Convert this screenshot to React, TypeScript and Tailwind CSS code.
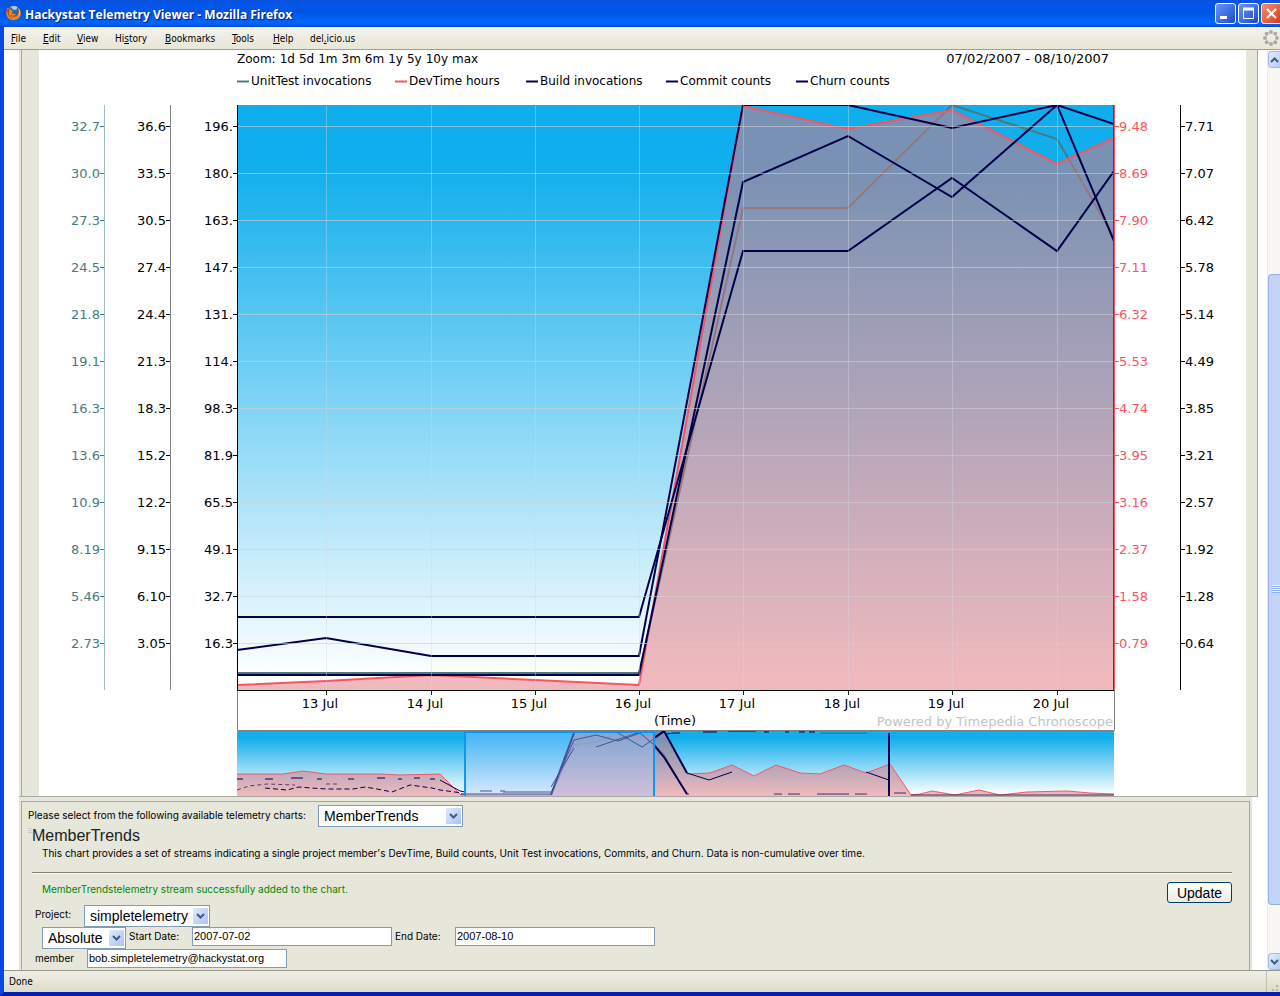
import React from "react";

const menuItems: [string, string, string, string][] = [
  ["", "F", "ile", "w-8"],
  ["", "E", "dit", "w-[34px]"],
  ["", "V", "iew", "w-[38px]"],
  ["Hi", "s", "tory", "w-[50px]"],
  ["", "B", "ookmarks", "w-[67px]"],
  ["", "T", "ools", "w-[41px]"],
  ["", "H", "elp", "w-[37px]"],
  ["del", ".", "icio.us", "w-16"],
];

const legend: [string, string, string][] = [
  ["UnitTest invocations", "bg-[#4a7a80] border-[#a9c0c3]", "w-[158px]"],
  ["DevTime hours", "bg-[#f85464] border-[#fbaab2]", "w-[131px]"],
  ["Build invocations", "bg-[#00004a] border-[#8080a8]", "w-[140px]"],
  ["Commit counts", "bg-[#00004a] border-[#8080a8]", "w-[130px]"],
  ["Churn counts", "bg-[#00004a] border-[#8080a8]", "w-[120px]"],
];

const zooms = ["1d", "5d", "1m", "3m", "6m", "1y", "5y", "10y", "max"];

const tests = ["32.7", "30.0", "27.3", "24.5", "21.8", "19.1", "16.3", "13.6", "10.9", "8.19", "5.46", "2.73"];
const builds = ["36.6", "33.5", "30.5", "27.4", "24.4", "21.3", "18.3", "15.2", "12.2", "9.15", "6.10", "3.05"];
const commits = ["196.", "180.", "163.", "147.", "131.", "114.", "98.3", "81.9", "65.5", "49.1", "32.7", "16.3"];
const hours = ["9.48", "8.69", "7.90", "7.11", "6.32", "5.53", "4.74", "3.95", "3.16", "2.37", "1.58", "0.79"];
const churn = ["7.71", "7.07", "6.42", "5.78", "5.14", "4.49", "3.85", "3.21", "2.57", "1.92", "1.28", "0.64"];
const days: [string, number][] = [
  ["13 Jul", 326], ["14 Jul", 431], ["15 Jul", 535], ["16 Jul", 639],
  ["17 Jul", 743], ["18 Jul", 848], ["19 Jul", 952], ["20 Jul", 1057],
];

const rowY = (i: number) => 126 + i * 47;

function Axis({ x, values, side, color, line }: { x: number; values: string[]; side: "left" | "right"; color: string; line: string }) {
  return (
    <g>
      <rect x={x} y={105} width={1} height={585} fill={line} />
      {values.map((v, i) => (
        <g key={v}>
          <rect x={side === "left" ? x - 4 : x + 1} y={rowY(i)} width={4} height={1} fill={color} />
          <text x={side === "left" ? x - 4 : x + 5} y={rowY(i) + 5} textAnchor={side === "left" ? "end" : "start"} fill={color}>{v}</text>
        </g>
      ))}
    </g>
  );
}

const area = "237,685 326,681 431,675 535,680 639,685 743,106 848,129 952,110 1057,164 1114,138";
const overviewArea =
  "237,774 283,774 290,773 303,771 318,773 326,774 370,774 380,774 400,775 440,774 461,795 551,795 574,733 618,732 640,737 654,736 664,731 687,774 710,773 732,765 754,776 776,765 800,773 820,774 844,765 866,773 890,764 911,795 920,794 932,791 955,795 979,790 1000,795 1027,792 1067,791 1090,793 1114,794";

function Chart() {
  return (
    <svg viewBox="39 105 1207 691" className="block w-full" role="img" aria-label="Telemetry streams, 12 Jul to 20 Jul" fontFamily="'DejaVu Sans', Verdana, sans-serif" fontSize="13">
      <defs>
        <linearGradient id="sky" x1="0" y1="0" x2="0" y2="1">
          <stop offset="0" stopColor="#10aeec" />
          <stop offset="0.1" stopColor="#10aeec" />
          <stop offset="0.98" stopColor="#ffffff" />
          <stop offset="1" stopColor="#ffffff" />
        </linearGradient>
        <clipPath id="plot"><rect x="237" y="105" width="877" height="585" /></clipPath>
        <clipPath id="over"><rect x="237" y="731" width="877" height="65" /></clipPath>
      </defs>

      <g clipPath="url(#plot)">
        <rect x="237" y="105" width="877" height="585" fill="url(#sky)" />
        <g fill="none" strokeWidth="2">
          <polyline stroke="#4a7a80" points="237,673 639,673 743,208 848,208 952,105 1057,139 1114,237" />
          <polygon points={`${area} 1114,690 237,690`} fill="#e0737c" fillOpacity="0.5" />
          <polyline points={area} stroke="#f85464" />
          <g stroke="#00004a">
            <polyline points="237,650 326,638 431,656 639,656 743,105 848,105 952,128 1057,105 1114,124" />
            <polyline points="237,675 639,675 743,182 848,136 952,197 1057,105 1114,241" />
            <polyline points="237,617 639,617 743,251 848,251 952,178 1057,251 1114,171" />
          </g>
        </g>
        <g fill="#d0cfcf" fillOpacity="0.6">
          {tests.map((_, i) => <rect key={i} x="237" y={rowY(i)} width="877" height="1" />)}
        </g>
        <g fill="#d0d8e4" fillOpacity="0.4">
          {days.map(([d, x]) => <rect key={d} x={x} y="105" width="1" height="585" />)}
        </g>
      </g>

      <Axis x={104} values={tests} side="left" color="#4a7a80" line="#9dbdbf" />
      <Axis x={170} values={builds} side="left" color="#000000" line="#848484" />
      <Axis x={237} values={commits} side="left" color="#000000" line="#000000" />
      <Axis x={1114} values={hours} side="right" color="#f85464" line="#f85464" />
      <Axis x={1180} values={churn} side="right" color="#000000" line="#000000" />
      <rect x="1113" y="105" width="1" height="585" fill="#50405c" />

      <path d="M237.5 690V730.5H1114.5V690" fill="none" stroke="#808080" />
      <rect x="237" y="690" width="877" height="1" fill="#000" />
      {days.map(([d, x]) => (
        <g key={d}>
          <rect x={x} y="690" width="1" height="5" fill="#222" />
          <text x={x - 6} y="708" textAnchor="middle">{d}</text>
        </g>
      ))}
      <text x="675" y="725" textAnchor="middle">(Time)</text>
      <text x="1113" y="726" textAnchor="end" fill="#c4c4c4">Powered by Timepedia Chronoscope</text>

      <g clipPath="url(#over)" fill="none">
        <rect x="237" y="731" width="877" height="65" fill="url(#sky)" />
        <polyline points="551,795 574,745 596,742 618,733 640,732 664,754 687,795" stroke="#4a7a80" />
        <polygon points={`${overviewArea} 1114,796 237,796`} fill="#e0737c" fillOpacity="0.5" />
        <polyline points={overviewArea} stroke="#f85464" />
        <g stroke="#00004a">
          <path d="M237 779h6M265 779h8M291 778h12M317 779h5M348 779h6M377 778h8M398 779h4M414 778h6M430 779h5" />
          <path d="M237 790l12-4 18-2 28 1M326 784h12" stroke="#5a4060" strokeDasharray="4 3" />
          <path d="M265 788l22 2 12-3 12 1 16 1h26l12-2 12 2 15 3 18-7 22 3 8 2 22 3" strokeDasharray="5 3" />
          <path d="M440 780l20 11 5 1M461 794h90M480 791h12M500 791h5M503 792h48" />
          <path d="M551 795l23-62" strokeWidth="2" />
          <path d="M551 793l23-53 22-5 22 6 22-8M551 787l23-39M596 747l44-15M618 733l24 14 22-15M640 733l14 12" />
          <path d="M654 738l10-7 23 42M654 745l10 12 23 37" strokeWidth="2" />
          <path d="M687 773l22 7 23-8M866 772l23 8" />
          <path d="M666 734l8-1h6M703 732h14M728 731h28M764 732h5M785 732h4M799 732h6M809 732h6" />
          <path d="M687 794h2M774 794h8M788 794h12M817 794h32M855 794h12M894 793h12M911 795h203" opacity="0.75" />
          <path d="M889 733V796" strokeWidth="2" />
          <path d="M820 733h47" stroke="#0878b8" />
        </g>
        <rect x="465" y="731" width="190" height="65" fill="#a0c8ff" fillOpacity="0.42" />
        <path d="M465 796V732H654V796" stroke="#0a98f8" strokeWidth="2" />
      </g>
    </svg>
  );
}

function Picker({ id, value, width }: { id: string; value: string; width: string }) {
  return (
    <div className={`relative h-[22px] shrink-0 ${width}`}>
      <select id={id} defaultValue={value} className="block h-full w-full appearance-none border border-[#7f9db9] bg-white pl-[5px] font-['Liberation_Sans',Arial,sans-serif] text-sm leading-5 text-black">
        <option>{value}</option>
      </select>
      <span className="pointer-events-none absolute top-[3px] right-0.5 flex h-4 w-[15px] items-center justify-center bg-gradient-to-br from-[#e0eaff] to-[#acc2f2]">
        <svg viewBox="0 0 9 6" className="h-1.5 w-[9px]"><path d="M1 1l3.500 3.500L8 1" fill="none" stroke="#425a80" strokeWidth="2" /></svg>
      </span>
    </div>
  );
}

function Field({ id, value }: { id: string; value: string }) {
  return <input id={id} type="text" defaultValue={value} className="block h-[19px] w-[200px] border border-[#7f9db9] bg-white px-px pb-0.5 font-['Liberation_Sans',Arial,sans-serif] text-[11px] leading-4 text-black" />;
}

function ScrollButton({ up, label }: { up?: boolean; label: string }) {
  return (
    <button type="button" aria-label={label} className="flex h-[17px] w-full shrink-0 items-center rounded-l-sm border border-r-0 border-[#a4b8e4] bg-gradient-to-br from-[#e4edff] to-[#b4caf8] pl-px">
      <svg viewBox="0 0 9 6" className="h-1.5 w-[9px] shrink-0"><path d={up ? "M1 5l3.500-3.500L8 5" : "M1 1l3.500 3.500L8 1"} fill="none" stroke="#425a80" strokeWidth="2" /></svg>
    </button>
  );
}

function FirefoxLogo() {
  return (
    <svg viewBox="0 0 16 16" className="mb-0.5 h-4 w-4">
      <circle cx="7.500" cy="8" r="7.200" fill="#d8540c" />
      <circle cx="7.600" cy="6.200" r="5.400" fill="#2c64b0" />
      <path d="M4.500 2C7 .6 10 .8 11.500 2.500L10 5 7 4.500z" fill="#9cd0f0" />
      <path d="M1.200 2.500L3 4.300 5 4.200C4.600 5.400 6 5.600 7.300 6L5.800 7.500C6 9.500 8.500 9.500 10 8.500 9.500 11 6.500 11.500 4 9.800 5.500 13 11 13 12.500 8.500 13 6 12.500 4 11.500 2.500 14.500 4 15.500 8 14 11.500 11 16.500 3.500 16.500 1.200 11.500 0 8.500.5 5 1.200 2.500z" fill="#f08418" />
      <path d="M12.500 3.500C14.800 6 14.500 9.500 12.800 11.800 13.500 9 13.500 6 12.500 3.500z" fill="#fcd040" />
      <path d="M1.500 3.500L3 5 2.500 8C3 11 4.500 12.500 7 13.500 3.500 13 1 9.500 1.500 3.500z" fill="#8c3008" />
    </svg>
  );
}

function WindowButton({ label, tone, children }: { label: string; tone: string; children: React.ReactNode }) {
  return (
    <button type="button" aria-label={label} className={`flex h-[21px] w-[21px] shrink-0 items-center justify-center rounded-[3px] border border-white bg-gradient-to-br ${tone}`}>
      <svg viewBox="0 0 19 19" className="h-[19px] w-[19px] shrink-0" fill="none" stroke="#fff">{children}</svg>
    </button>
  );
}

export default function App() {
  return (
    <div className="flex min-h-screen flex-col overflow-hidden bg-[#0a46e4] font-['Liberation_Sans',Arial,sans-serif] text-black">
      <header className="flex h-[27px] shrink-0 items-center bg-[linear-gradient(to_bottom,#0a50dc_0%,#0456ea_15%,#0055e5_45%,#0064fc_80%,#0060f4_92%,#0040c8_100%)] pl-1.5">
        <FirefoxLogo />
        <h1 className="ml-[3px] flex-1 pt-0.5 font-['Open_Sans',sans-serif] text-xs font-bold text-white [text-shadow:1px_1px_1px_#0a1883]">Hackystat Telemetry Viewer - Mozilla Firefox</h1>
        <div className="-mr-0.5 flex gap-0.5">
          <WindowButton label="Minimize" tone="from-[#6c94f4] to-[#1848d0]"><path d="M4 13.500h7" strokeWidth="3" /></WindowButton>
          <WindowButton label="Maximize" tone="from-[#6c94f4] to-[#1848d0]"><path d="M4.500 5v9.500h10V5" /><path d="M4 5h11" strokeWidth="3" /></WindowButton>
          <WindowButton label="Close" tone="from-[#f09070] to-[#d03810]"><path d="M5 5l9 9M14 5l-9 9" strokeWidth="2.200" /></WindowButton>
        </div>
      </header>

      <div className="flex flex-1 flex-col border-b-4 border-l-4 border-b-[#0420b4] border-l-[#0a46e4]">
        <nav className="flex h-[23px] shrink-0 items-center border-b border-[#a09f8c] bg-gradient-to-b from-[#f3f2ec] to-[#e8e6d6] pl-[7px] font-['DejaVu_Sans_Condensed','DejaVu_Sans',sans-serif] text-[10px]">
          {menuItems.map(([a, u, b, w]) => (
            <button key={a + u + b} type="button" className={`text-left whitespace-nowrap ${w}`}>{a}<u>{u}</u>{b}</button>
          ))}
          <svg viewBox="0 0 16 16" className="mr-px ml-auto h-4 w-4 shrink-0 fill-[#aaaaa6]" aria-hidden="true">
            <circle cx="8" cy="2" r="2" /><circle cx="12.300" cy="3.700" r="2" /><circle cx="14" cy="8" r="2" /><circle cx="12.300" cy="12.300" r="2" />
            <circle cx="8" cy="14" r="2" /><circle cx="3.700" cy="12.300" r="2" /><circle cx="2" cy="8" r="2" /><circle cx="3.700" cy="3.700" r="2" />
          </svg>
        </nav>

        <div className="flex flex-1 bg-white">
          <main className="flex min-w-0 flex-1 flex-col pr-[9px] pl-[15px]">
            <section className="border-b border-[#a8a8a8] bg-[#e6e6da] pl-0.5">
              <div className="border-x border-[#a8a8a8] pr-[11px] pl-[17px]">
                <div className="bg-white">
                  <div className="flex h-[17px] items-center justify-between pr-[137px] pl-[198px] font-['DejaVu_Sans',sans-serif] text-xs">
                    <div className="flex gap-1">
                      <span>Zoom:</span>
                      {zooms.map((z) => <button key={z} type="button">{z}</button>)}
                    </div>
                    <span className="text-[13px]">07/02/2007 - 08/10/2007</span>
                  </div>
                  <ul className="flex h-[38px] items-start pt-[5px] pl-[198px] font-['DejaVu_Sans',sans-serif] text-xs leading-[18px]">
                    {legend.map(([name, tone, w]) => (
                      <li key={name} className={`flex shrink-0 items-center gap-0.5 whitespace-nowrap ${w}`}>
                        <span className={`h-[3px] w-3 border-y ${tone}`} />{name}
                      </li>
                    ))}
                  </ul>
                  <Chart />
                </div>
              </div>
            </section>

            <section className="mr-1.5 flex flex-1 flex-col bg-[#e6e6da] pt-1 pr-0.5 pl-0.5">
              <div className="flex-1 border border-b-0 border-[#a8a8a8] pr-[17px] pl-1.5 font-['Inter',sans-serif] text-[10px] leading-5">
                <div className="flex items-start pt-[3px]">
                  <label htmlFor="chart" className="w-[290px] whitespace-nowrap">Please select from the following available telemetry charts:</label>
                  <Picker id="chart" value="MemberTrends" width="w-[145px]" />
                </div>
                <div className="flex items-start">
                  <svg viewBox="0 0 6 8" className="h-2 w-1 shrink-0 fill-[#b0b0a8]" aria-hidden="true"><path d="M0 0h2v1H0zM3 0h2v1H3zM0 3h2v1H0zM3 3h2v1H3zM0 6h2v1H0zM3 6h2v1H3z" /></svg>
                  <h2 className="font-['Liberation_Sans',Arial,sans-serif] text-base leading-[18px] text-[#202020]">MemberTrends</h2>
                </div>
                <p className="pl-3.5 leading-4">This chart provides a set of streams indicating a single project member's DevTime, Build counts, Unit Test invocations, Commits, and Churn. Data is non-cumulative over time.</p>
                <hr className="mt-[11px] ml-1 h-0.5 border-t border-b border-t-[#808078] border-b-[#f8f8f4]" />
                <div className="flex h-[31px] items-start justify-between pt-2 pl-3.5">
                  <p role="status" className="leading-[14px] text-[#008800]">MemberTrendstelemetry stream successfully added to the chart.</p>
                  <button type="button" className="h-[21px] w-[65px] rounded-[3px] border border-[#003c74] bg-gradient-to-b from-white to-[#ecebe4] font-['Liberation_Sans',Arial,sans-serif] text-sm leading-[18px]">Update</button>
                </div>
                <div className="flex items-start pl-[7px]">
                  <label htmlFor="project" className="w-[49px] leading-[18px]">Project:</label>
                  <Picker id="project" value="simpletelemetry" width="w-[126px]" />
                </div>
                <div className="flex items-start pl-3.5">
                  <Picker id="mode" value="Absolute" width="w-[84px]" />
                  <label htmlFor="start" className="ml-[3px] w-[63px] leading-[18px]">Start Date:</label>
                  <Field id="start" value="2007-07-02" />
                  <label htmlFor="end" className="ml-[3px] w-[60px] leading-[18px]">End Date:</label>
                  <Field id="end" value="2007-08-10" />
                </div>
                <div className="flex items-start pl-[7px]">
                  <label htmlFor="member" className="w-[52px] leading-[18px]">member</label>
                  <Field id="member" value="bob.simpletelemetry@hackystat.org" />
                </div>
              </div>
            </section>
          </main>

          <aside aria-label="Page scroll" className="flex w-[13px] shrink-0 flex-col border-l border-[#eeede5] bg-[#f8f7f3] pt-px">
            <ScrollButton up label="Scroll up" />
            <div className="flex flex-1 flex-col">
              <div className="flex-[206_1_0%]" />
              <div className="flex flex-[631_1_0%] items-center rounded-l-sm border border-r-0 border-[#98b0e0] bg-[#c4d4f8] pl-[3px]">
                <span className="h-2 w-full bg-[repeating-linear-gradient(to_bottom,#eef4fe_0_1px,#8cb0f8_1px_2px)]" />
              </div>
              <div className="flex-[48_1_0%]" />
            </div>
            <ScrollButton label="Scroll down" />
          </aside>
        </div>

        <footer className="flex h-[22px] shrink-0 items-stretch border-t border-[#98978a] bg-gradient-to-b from-[#f0efe4] to-[#dddbc8] font-['DejaVu_Sans_Condensed','DejaVu_Sans',sans-serif] text-[10px]">
          <span className="flex flex-1 items-center pl-[5px]">Done</span>
          <span className="flex w-3.5 items-end justify-end border-l border-[#c4c2b0]">
            <svg viewBox="0 0 8 8" className="h-2 w-2 fill-[#b8b6a0]" aria-hidden="true"><path d="M4 1h2v2H4zM0 5h2v2H0zM4 5h2v2H4z" /></svg>
          </span>
        </footer>
      </div>
    </div>
  );
}
